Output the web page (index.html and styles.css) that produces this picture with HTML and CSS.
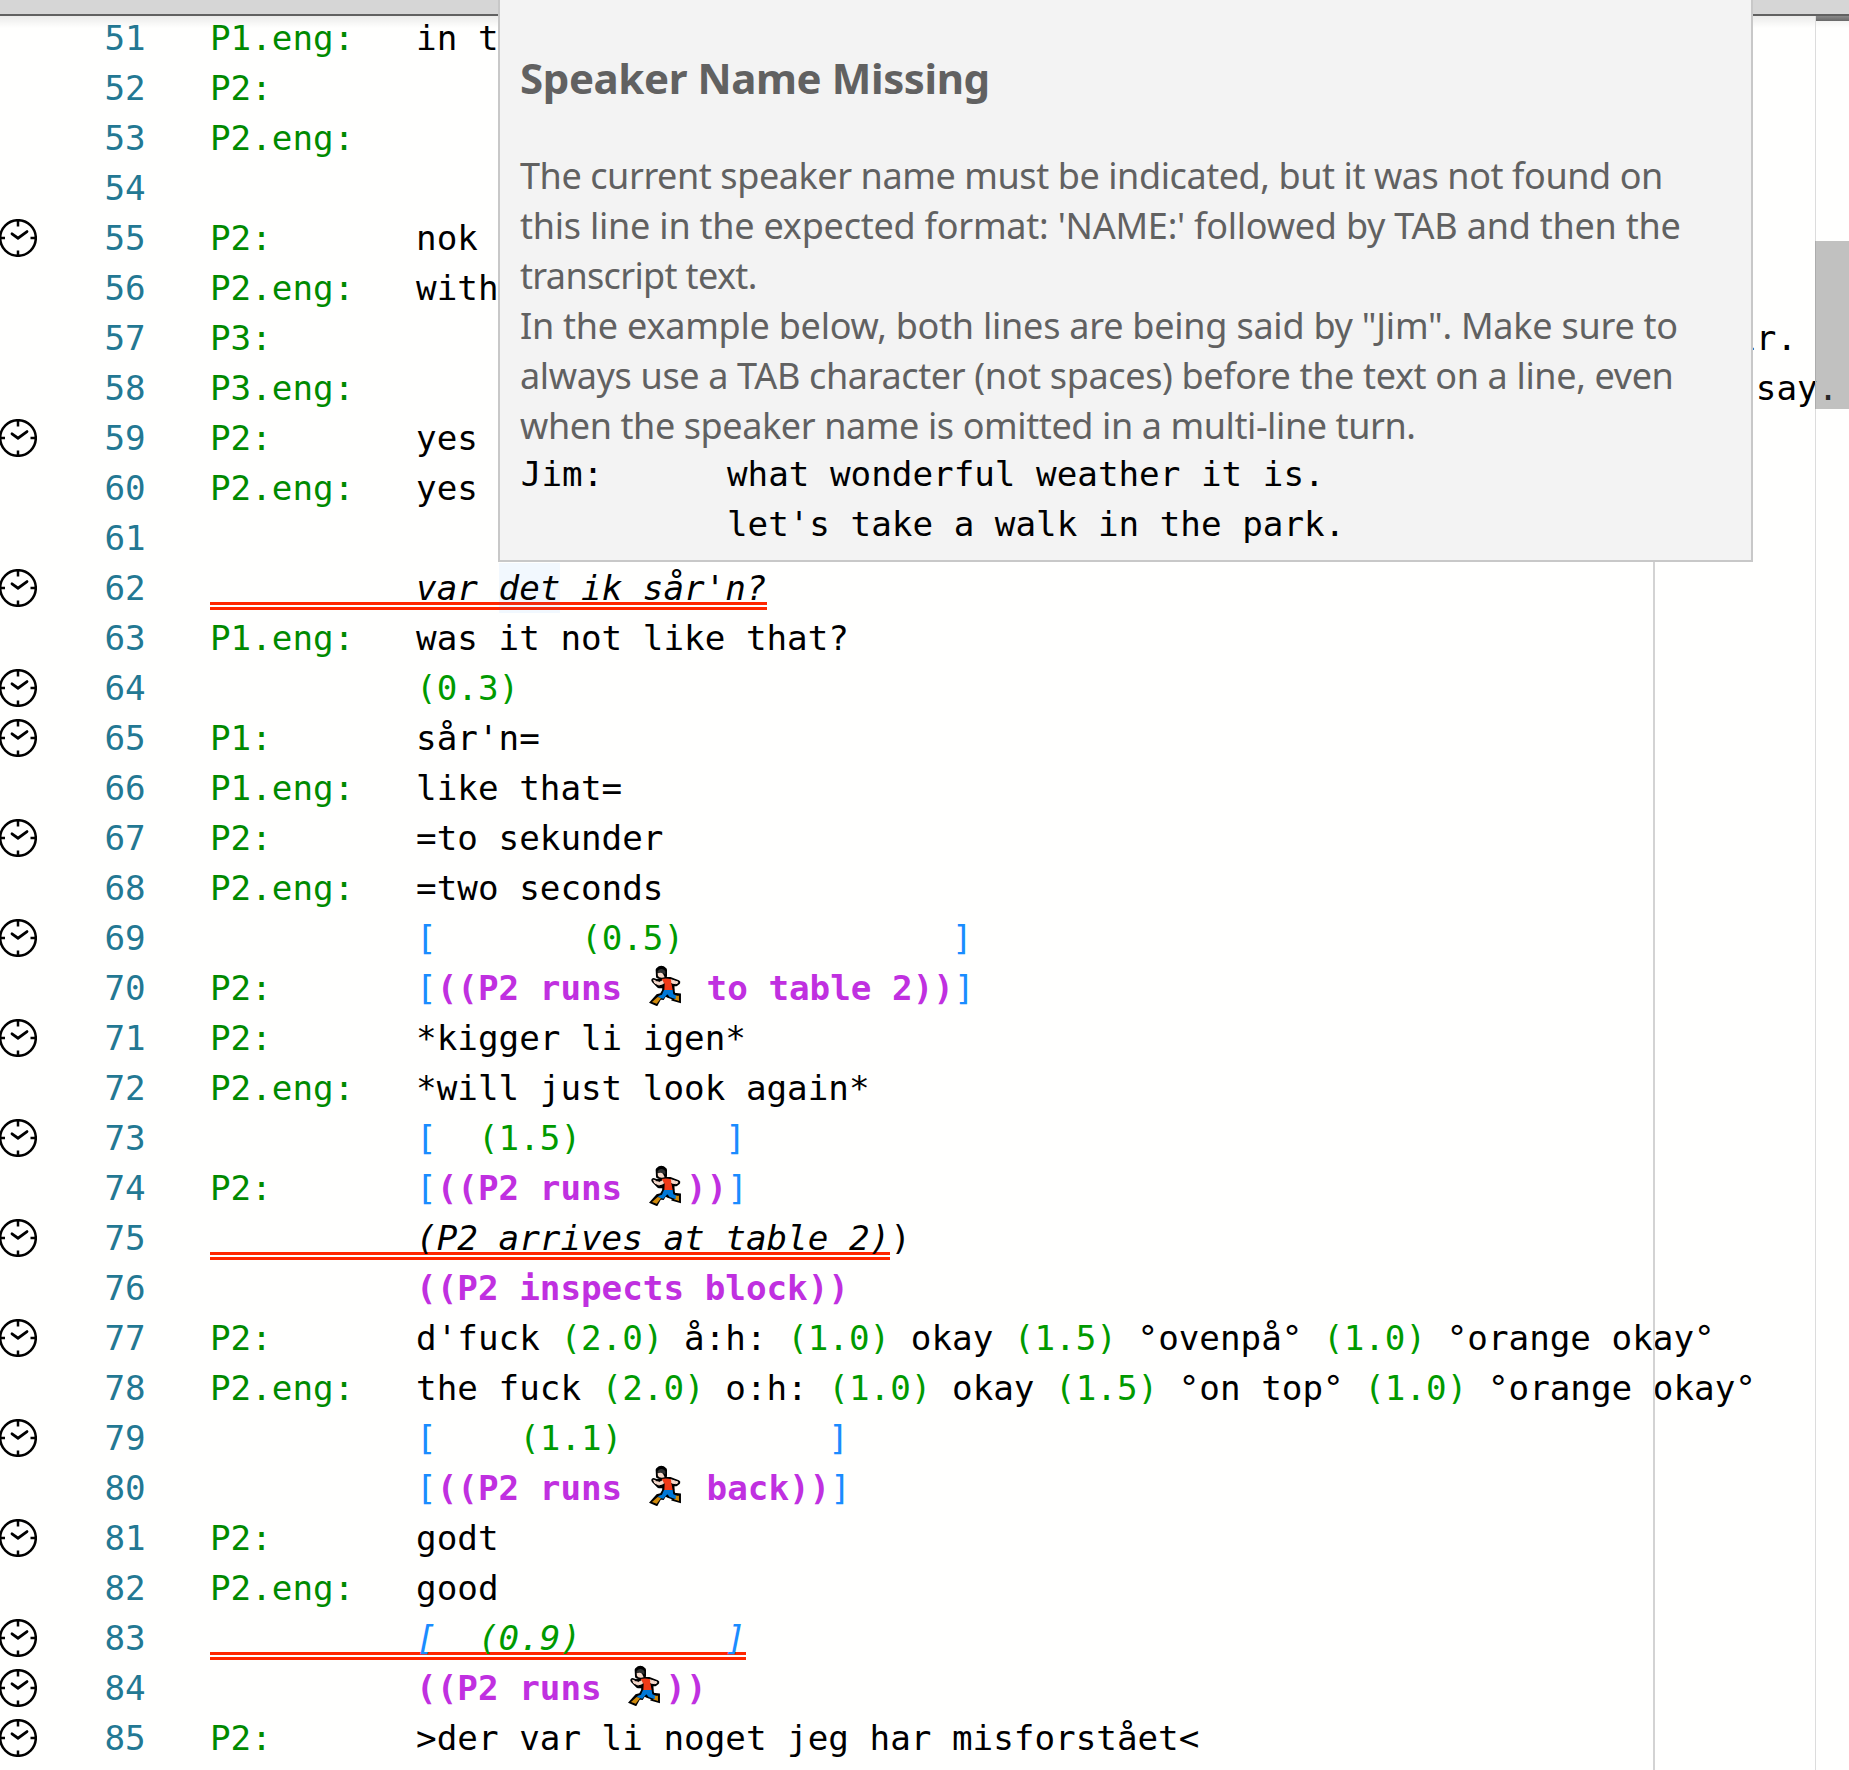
FILE: index.html
```html
<!DOCTYPE html>
<html lang="en">
<head>
<meta charset="utf-8">
<title>Transcript editor</title>
<link rel="stylesheet" href="styles.css">
</head>
<body>
<svg width="0" height="0" class="defs">
  <symbol id="clock" viewBox="0 0 37 38">
    <g fill="none" stroke="#000" stroke-width="2.5">
      <circle cx="18" cy="19" r="17.8"/>
      <path d="M18 1v6.5M18 31.5v6M0 19h5M30.500 19h6"/>
      <path d="M12 14.800L18 19.200L27 12.600" stroke-width="2.800" stroke-linecap="round"/>
    </g>
  </symbol>
  <symbol id="runner" viewBox="10 16 100 124">
    <g fill="#000" stroke="#000" stroke-width="14" stroke-linejoin="round">
      <path d="M37 31Q47 21 57 31V50L48 52L38 50Z"/>
      <path d="M51 59H74L97 68L90 73L79 72L80 91L57 92L56 78L40 79L24 62L35 66Z"/>
      <path d="M56 92H80L84 105L100 107V123L83 118V114L68 109L58 103L51 115L42 114L32 132L20 127L36 109L48 106Z" stroke-width="12" stroke-linejoin="miter"/>
    </g>
    <path d="M36 42V34Q47 22 59 34V44Q48 37 36 42Z" fill="#333"/>
    <path d="M36 41Q46 37 52 42L57 53Q48 56 41 53Q35 49 36 41Z" fill="#f7dacb"/>
    <path d="M24 61L33 66L42 68L53 62V72L40 76L27 70ZM75 60L97 67Q96 73 90 72L78 70Z" fill="#f7dacb" stroke="#f7dacb" stroke-width="3" stroke-linejoin="round"/>
    <path d="M48 58Q62 54 76 59L77 70L81 91L56 93L57 73Z" fill="#f03a17"/>
    <path d="M55 91H81L83 104L94 108L91 119L72 112L65 104L53 117L36 113L40 108L49 105Z" fill="#0078d7"/>
    <path d="M36 112L46 116L33 132L19 127ZM90 108H100V124L84 119L91 117Z" fill="#d08a0c"/>
  </symbol>
</svg>
<div class="app">
  <header class="topbar"></header>
  <main class="editor">
    <div class="row"><i></i><b>51</b><pre><s>P1.eng:</s>	in t</pre></div>
    <div class="row"><i></i><b>52</b><pre><s>P2:</s></pre></div>
    <div class="row"><i></i><b>53</b><pre><s>P2.eng:</s></pre></div>
    <div class="row"><i></i><b>54</b><pre></pre></div>
    <div class="row"><i><svg><use href="#clock"/></svg></i><b>55</b><pre><s>P2:</s>	nok</pre></div>
    <div class="row"><i></i><b>56</b><pre><s>P2.eng:</s>	with</pre></div>
    <div class="row"><i></i><b>57</b><pre><s>P3:</s>	                                                                <span>ir.</span></pre></div>
    <div class="row"><i></i><b>58</b><pre><s>P3.eng:</s>	                                                                 <span>say.</span></pre></div>
    <div class="row"><i><svg><use href="#clock"/></svg></i><b>59</b><pre><s>P2:</s>	yes</pre></div>
    <div class="row"><i></i><b>60</b><pre><s>P2.eng:</s>	yes</pre></div>
    <div class="row"><i></i><b>61</b><pre></pre></div>
    <div class="row"><i><svg><use href="#clock"/></svg></i><b>62</b><pre><span class="error">	var <mark>det</mark> ik sår'n?</span></pre></div>
    <div class="row"><i></i><b>63</b><pre><s>P1.eng:</s>	was it not like that?</pre></div>
    <div class="row"><i><svg><use href="#clock"/></svg></i><b>64</b><pre>	<span class="pause">(0.3)</span></pre></div>
    <div class="row"><i><svg><use href="#clock"/></svg></i><b>65</b><pre><s>P1:</s>	sår'n=</pre></div>
    <div class="row"><i></i><b>66</b><pre><s>P1.eng:</s>	like that=</pre></div>
    <div class="row"><i><svg><use href="#clock"/></svg></i><b>67</b><pre><s>P2:</s>	=to sekunder</pre></div>
    <div class="row"><i></i><b>68</b><pre><s>P2.eng:</s>	=two seconds</pre></div>
    <div class="row"><i><svg><use href="#clock"/></svg></i><b>69</b><pre>	<span class="overlap">[</span>       <span class="pause">(0.5)</span>             <span class="overlap">]</span></pre></div>
    <div class="row"><i></i><b>70</b><pre><s>P2:</s>	<span class="overlap">[</span><span class="action">((P2 runs <svg class="runner"><use href="#runner"/></svg> to table 2))</span><span class="overlap">]</span></pre></div>
    <div class="row"><i><svg><use href="#clock"/></svg></i><b>71</b><pre><s>P2:</s>	*kigger li igen*</pre></div>
    <div class="row"><i></i><b>72</b><pre><s>P2.eng:</s>	*will just look again*</pre></div>
    <div class="row"><i><svg><use href="#clock"/></svg></i><b>73</b><pre>	<span class="overlap">[</span>  <span class="pause">(1.5)</span>       <span class="overlap">]</span></pre></div>
    <div class="row"><i></i><b>74</b><pre><s>P2:</s>	<span class="overlap">[</span><span class="action">((P2 runs <svg class="runner"><use href="#runner"/></svg>))</span><span class="overlap">]</span></pre></div>
    <div class="row"><i><svg><use href="#clock"/></svg></i><b>75</b><pre><span class="error">	(P2 arrives at table 2)</span>)</pre></div>
    <div class="row"><i></i><b>76</b><pre>	<span class="action">((P2 inspects block))</span></pre></div>
    <div class="row"><i><svg><use href="#clock"/></svg></i><b>77</b><pre><s>P2:</s>	d'fuck <span class="pause">(2.0)</span> å:h: <span class="pause">(1.0)</span> okay <span class="pause">(1.5)</span> °ovenpå° <span class="pause">(1.0)</span> °orange okay°</pre></div>
    <div class="row"><i></i><b>78</b><pre><s>P2.eng:</s>	the fuck <span class="pause">(2.0)</span> o:h: <span class="pause">(1.0)</span> okay <span class="pause">(1.5)</span> °on top° <span class="pause">(1.0)</span> °orange okay°</pre></div>
    <div class="row"><i><svg><use href="#clock"/></svg></i><b>79</b><pre>	<span class="overlap">[</span>    <span class="pause">(1.1)</span>          <span class="overlap">]</span></pre></div>
    <div class="row"><i></i><b>80</b><pre>	<span class="overlap">[</span><span class="action">((P2 runs <svg class="runner"><use href="#runner"/></svg> back))</span><span class="overlap">]</span></pre></div>
    <div class="row"><i><svg><use href="#clock"/></svg></i><b>81</b><pre><s>P2:</s>	godt</pre></div>
    <div class="row"><i></i><b>82</b><pre><s>P2.eng:</s>	good</pre></div>
    <div class="row"><i><svg><use href="#clock"/></svg></i><b>83</b><pre><span class="error">	<span class="overlap">[</span>  <span class="pause">(0.9)</span>       <span class="overlap">]</span></span></pre></div>
    <div class="row"><i><svg><use href="#clock"/></svg></i><b>84</b><pre>	<span class="action">((P2 runs <svg class="runner"><use href="#runner"/></svg>))</span></pre></div>
    <div class="row"><i><svg><use href="#clock"/></svg></i><b>85</b><pre><s>P2:</s>	&gt;der var li noget jeg har misforstået&lt;</pre></div>
  </main>
  <div class="ruler"></div>
  <div class="shadow"></div>
  <div class="scrollbar"><div class="change"></div><div class="slider"></div></div>
  <aside class="tooltip">
    <h3>Speaker Name Missing</h3>
    <p>
      <span class="l1">The current speaker name must be indicated, but it was not found on</span>
      <span class="l2">this line in the expected format: 'NAME:' followed by TAB and then the</span>
      <span class="l3">transcript text.</span>
      <span class="l4">In the example below, both lines are being said by "Jim". Make sure to</span>
      <span class="l5">always use a TAB character (not spaces) before the text on a line, even</span>
      <span class="l6">when the speaker name is omitted in a multi-line turn.</span>
    </p>
    <pre>Jim:	what wonderful weather it is.
	let's take a walk in the park.</pre>
  </aside>
</div>
</body>
</html>
```
FILE: styles.css
```css
* { box-sizing: border-box; }
body { margin: 0; background: #fffffe; }
.defs { position: absolute; }
.app {
  position: relative;
  width: 1849px;
  height: 1770px;
  overflow: hidden;
}
.topbar {
  height: 16px;
  background: #d6d6d6;
  border-bottom: 2px solid #616161;
}
.editor { margin-top: -3px; }
.editor, pre {
  font: 34.24px/50px "DejaVu Sans Mono", monospace;
  color: #000;
}
pre { margin: 0; tab-size: 10; white-space: pre; }

.row { display: flex; height: 50px; }
.row > i { width: 104.5px; flex: none; padding-top: 6px; }
.row > i svg { display: block; width: 37px; height: 38px; }
.row > b { width: 105.5px; flex: none; font-weight: normal; color: #237893; }
.row s { text-decoration: none; color: #008a00; }
.pause { color: #009a00; }
.overlap { color: #1a8cff; }
.action { color: #c030e0; font-weight: bold; }
.runner {
  display: inline-block;
  width: 33.3px;
  height: 41.3px;
  margin: 2.3px 4px 0 5.8px;
  vertical-align: top;
}
.error {
  display: inline-block;
  height: 50px;
  font-style: italic;
  background:
    linear-gradient(#ff2600, #ff2600) 0 39px / 100% 3px no-repeat,
    linear-gradient(#ff2600, #ff2600) 0 44px / 100% 3px no-repeat;
}
mark {
  display: inline-block;
  height: 50px;
  vertical-align: top;
  color: inherit;
  background: rgba(0, 110, 255, 0.05);
}

.ruler {
  position: absolute;
  left: 1653px;
  top: 16px;
  bottom: 0;
  width: 2px;
  background: #d3d3d3;
}
.shadow {
  position: absolute;
  left: 0;
  right: 0;
  top: 16px;
  height: 12px;
  background: linear-gradient(rgba(0, 0, 0, 0.08), rgba(0, 0, 0, 0));
}
.scrollbar {
  position: absolute;
  left: 1815px;
  right: 0;
  top: 16px;
  bottom: 0;
  border-left: 1px solid #dcdcdc;
}
.change { height: 5px; background: linear-gradient(#898989, #686868); }
.slider {
  height: 168px;
  margin: 220px 0 0 -1px;
  background: rgba(100, 100, 100, 0.4);
}

.tooltip {
  position: absolute;
  left: 498px;
  top: 0;
  width: 1255px;
  height: 562px;
  padding: 50px 20px 0;
  background: #f3f3f3;
  border: 2px solid #c8c8c8;
  border-top: 0;
  color: #616161;
  font: 36px/50px "Noto Sans", "Open Sans", sans-serif;
}
.tooltip h3 {
  margin: 0 0 45px;
  font-size: 42px;
  line-height: 56px;
  font-weight: bold;
  letter-spacing: -0.4px;
}
.tooltip p { margin: 0; }
.tooltip p span { display: table; height: 50px; white-space: nowrap; }
.tooltip pre { margin: -2px 0 0 0.8px; }
.l1 { letter-spacing: -0.42px; }
.l2 { letter-spacing: -0.23px; }
.l3 { letter-spacing: -0.65px; }
.l4 { letter-spacing: -0.24px; }
.l5 { letter-spacing: -0.35px; }
.l6 { letter-spacing: -0.4px; }
```
